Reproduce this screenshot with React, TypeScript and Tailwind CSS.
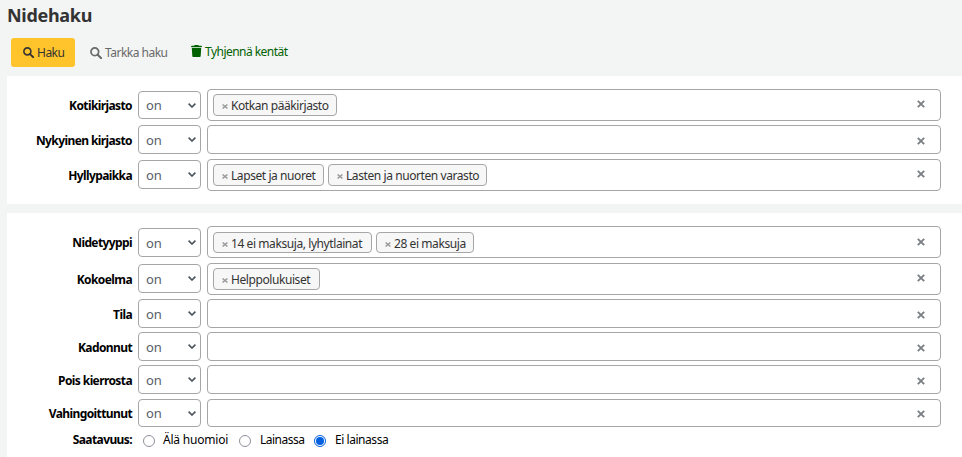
import React from "react";

type Chip = { text: string; width: string };
type Row = {
  label: string;
  row: string;
  select: string;
  labelPos: string;
  clear: string;
  chipPos?: string;
  chips?: Chip[];
};

const libraryRows: Row[] = [
  { label: "Kotikirjasto", row: "mt-[13px] h-8", select: "mt-[2px] h-7", labelPos: "mt-[8px]", clear: "mt-[10px]", chipPos: "mt-[4px] h-[22px]", chips: [{ text: "Kotkan pääkirjasto", width: "w-[124px]" }] },
  { label: "Nykyinen kirjasto", row: "mt-[4px] h-[29px]", select: "h-[29px]", labelPos: "mt-[7px]", clear: "mt-[11px]" },
  { label: "Hyllypaikka", row: "mt-[5px] h-8", select: "mt-[1px] h-[29px]", labelPos: "mt-[8px]", clear: "mt-[10px]", chipPos: "mt-[4px] h-[22px]", chips: [{ text: "Lapset ja nuoret", width: "w-[111px]" }, { text: "Lasten ja nuorten varasto", width: "w-[159px]" }] },
];

const itemRows: Row[] = [
  { label: "Nidetyyppi", row: "mt-[13px] h-8", select: "mt-[2px] h-[29px]", labelPos: "mt-[8px]", clear: "mt-[11px]", chipPos: "mt-[5px] h-[21px]", chips: [{ text: "14 ei maksuja, lyhytlainat", width: "w-[159px]" }, { text: "28 ei maksuja", width: "w-[98px]" }] },
  { label: "Kokoelma", row: "mt-[5px] h-8", select: "mt-[1px] h-[29px]", labelPos: "mt-[8px]", clear: "mt-[10px]", chipPos: "mt-[4px] h-[22px]", chips: [{ text: "Helppolukuiset", width: "w-[107px]" }] },
  { label: "Tila", row: "mt-[4px] h-[29px]", select: "h-[29px]", labelPos: "mt-[7px]", clear: "mt-[11px]" },
  { label: "Kadonnut", row: "mt-[4px] h-[29px]", select: "h-[29px]", labelPos: "mt-[7px]", clear: "mt-[11px]" },
  { label: "Pois kierrosta", row: "mt-[4px] h-[29px]", select: "h-[29px]", labelPos: "mt-[7px]", clear: "mt-[11px]" },
  { label: "Vahingoittunut", row: "mt-[5px] h-7", select: "h-7", labelPos: "mt-[6px]", clear: "mt-[10px]" },
];

function SearchIcon({ className }: { className: string }) {
  return (
    <svg className={className} viewBox="0 0 12 12" fill="none" stroke="currentColor">
      <circle cx="4.8" cy="4.8" r="3.850" strokeWidth="1.7" />
      <path d="M7.700 7.700L11.200 11.200" strokeWidth="2" strokeLinecap="round" />
    </svg>
  );
}

function TrashIcon() {
  return (
    <svg className="mt-[7px] h-3 w-[11px] shrink-0" viewBox="0 0 448 512" preserveAspectRatio="none" fill="currentColor">
      <path d="M135.200 17.700L128 32H32C14.300 32 0 46.300 0 64S14.300 96 32 96H416c17.700 0 32-14.300 32-32s-14.300-32-32-32H320l-7.200-14.300C307.400 6.800 296.300 0 284.200 0H163.800c-12.100 0-23.200 6.800-28.600 17.700zM416 128H32L53.200 467c1.600 25.300 22.600 45 47.900 45H346.900c25.300 0 46.300-19.700 47.900-45L416 128z" />
    </svg>
  );
}

function Cross({ className }: { className: string }) {
  return (
    <svg className={className} viewBox="0 0 8 8" fill="none" stroke="currentColor" preserveAspectRatio="none">
      <path d="M.8 .8l6.400 6.400M7.200 .8L.8 7.200" strokeWidth="1.9" />
    </svg>
  );
}

function FieldRow({ r }: { r: Row }) {
  return (
    <div className={`flex items-start ${r.row}`}>
      <div className={`w-[125px] text-right text-[12px] leading-[18px] font-bold whitespace-nowrap tracking-[-0.6px] text-black ${r.labelPos}`}>{r.label}</div>
      <div className={`ml-[6px] flex w-[63px] shrink-0 items-center justify-between rounded-[4px] border border-[#a6a6a6] bg-white pr-[4px] pl-[7px] ${r.select}`}>
        <span className="text-[13px] leading-[18px] text-[#57606a]">on</span>
        <svg className="h-[5px] w-[8px]" viewBox="0 0 8 5" fill="none" stroke="#4b525a" strokeWidth="1.6">
          <path d="M.6 .6L4 4L7.400 .6" />
        </svg>
      </div>
      <div className="ml-[6px] flex h-full w-[734px] shrink-0 items-start gap-1 rounded-[4px] border border-[#a6a6a6] bg-white pl-[5px]">
        {r.chips?.map((c) => (
          <div key={c.text} className={`flex items-center rounded-[4px] border border-[#a6a6a6] bg-[#f7f7f7] pl-[8px] ${c.width} ${r.chipPos}`}>
            <Cross className="mt-[3px] mr-[3px] h-[5px] w-[6px] shrink-0 text-[#999]" />
            <span className="mt-[2px] text-[12px] leading-[18px] whitespace-nowrap tracking-[-0.42px] text-[#333]">{c.text}</span>
          </div>
        ))}
        <Cross className={`mr-[15px] ml-auto h-[8px] w-[8px] text-[#7c8084] ${r.clear}`} />
      </div>
    </div>
  );
}

function Radio({ on }: { on?: boolean }) {
  return (
    <span className={`mt-[4px] flex h-3 w-3 shrink-0 items-center justify-center rounded-full border bg-white ${on ? "border-[#0060df]" : "border-[#8f8f9d]"}`}>
      {on && <span className="h-2 w-2 rounded-full bg-[#0060df]" />}
    </span>
  );
}

export default function App() {
  return (
    <div className="h-[457px] w-[962px] overflow-hidden bg-[#f3f4f4] pl-[7px] font-['Noto_Sans',sans-serif]">
      <h1 className="h-[38px] pt-[3px] text-[18px] leading-[25px] font-bold tracking-[-0.3px] text-[#333]">Nidehaku</h1>
      <div className="flex h-[38px] items-start text-[12px] leading-[18px] whitespace-nowrap">
        <button className="ml-[4px] flex h-[29px] w-[64px] items-center rounded-[3px] bg-[#ffc32b] pl-[12px] text-[#333]">
          <SearchIcon className="mr-[3px] h-[11px] w-[11px] shrink-0" />
          <span className="mt-px tracking-[-0.5px]">Haku</span>
        </button>
        <button className="ml-[15px] flex h-[29px] w-[86px] items-center text-[#696969]">
          <SearchIcon className="mr-[3px] h-3 w-3 shrink-0" />
          <span className="mt-px tracking-[-0.5px]">Tarkka haku</span>
        </button>
        <a className="ml-[15px] flex text-[#006100]">
          <TrashIcon />
          <span className="mt-[5px] ml-[3px] tracking-[-0.53px]">Tyhjennä kentät</span>
        </a>
      </div>
      <section className="flex h-32 flex-col bg-white">
        {libraryRows.map((r) => <FieldRow key={r.label} r={r} />)}
      </section>
      <section className="mt-[9px] flex h-[244px] flex-col bg-white">
        {itemRows.map((r) => <FieldRow key={r.label} r={r} />)}
        <div className="mt-[4px] flex items-start text-[12px] leading-[18px] whitespace-nowrap text-black">
          <span className="w-[125px] text-right font-bold tracking-[-0.6px]">Saatavuus:</span>
          <label className="ml-[11px] flex w-[96px]"><Radio /><span className="ml-[8px] tracking-[-0.2px]">Älä huomioi</span></label>
          <label className="flex w-[75px]"><Radio /><span className="ml-[9px] tracking-[-0.5px]">Lainassa</span></label>
          <label className="flex"><Radio on /><span className="ml-[9px] tracking-[-0.45px]">Ei lainassa</span></label>
        </div>
      </section>
    </div>
  );
}
